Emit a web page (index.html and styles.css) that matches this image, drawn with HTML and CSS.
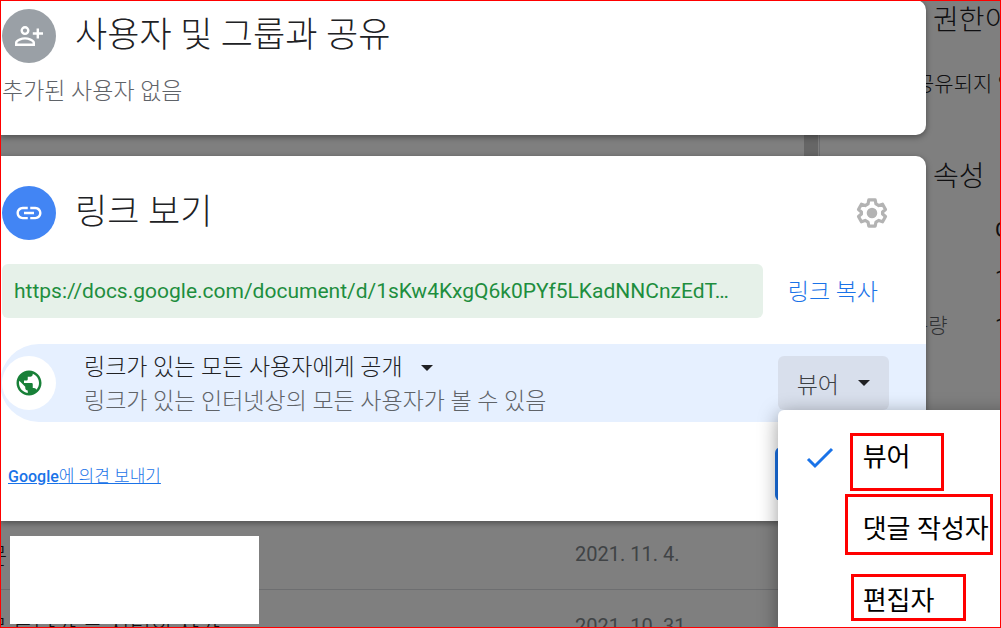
FILE: index.html
```html
<!DOCTYPE html>
<html lang="ko">
<head>
<meta charset="utf-8">
<title>사용자 및 그룹과 공유</title>
<link rel="stylesheet" href="styles.css">
</head>
<body>
<div class="screen">
  <div class="drive">
    <main class="files">
      <div class="file-row"><span class="file-name">문</span><time class="file-date">2021. 11. 4.</time></div>
      <div class="file-row"><span class="file-name">문 트다가 는 시티의 사가</span><time class="file-date">2021. 10. 31.</time></div>
    </main>
    <div class="scrollbar"></div>
    <aside class="details">
      <h2 class="details-title">권한이</h2>
      <p class="details-note">공유되지 않음</p>
      <h2 class="details-title">속성</h2>
      <dl class="facts">
        <dt></dt><dd>Google</dd>
        <dt></dt><dd>1KB</dd>
        <dt>용량</dt><dd>1KB</dd>
      </dl>
    </aside>
  </div>

  <div class="scrim">
    <section class="card people">
      <header class="card-head">
        <span class="badge badge-gray">
          <svg width="30" height="30" viewBox="0 0 30 30" fill="none" stroke="#fff" stroke-width="2.4"><circle cx="11" cy="9.6" r="3.3"/><path d="M2.2 23.8V21.8C2.2 19 8 17.4 11 17.4S19.8 19 19.8 21.8V23.8ZM23.8 7.6V17.4M18.8 12.5H29"/></svg>
        </span>
        <h1 class="card-title">사용자 및 그룹과 공유</h1>
      </header>
      <p class="people-note">추가된 사용자 없음</p>
    </section>

    <section class="card link">
      <header class="card-head">
        <span class="badge badge-blue">
          <svg width="30" height="30" viewBox="0 0 24 24" fill="#fff"><path d="M3.9 12c0-1.71 1.39-3.1 3.1-3.1h4V7H7c-2.76 0-5 2.24-5 5s2.24 5 5 5h4v-1.9H7c-1.71 0-3.1-1.39-3.1-3.1zM8 13h8v-2H8v2zm9-6h-4v1.9h4c1.71 0 3.1 1.39 3.1 3.1s-1.39 3.1-3.1 3.1h-4V17h4c2.76 0 5-2.24 5-5s-2.24-5-5-5z"/></svg>
        </span>
        <h1 class="card-title">링크 보기</h1>
        <button class="gear" type="button" aria-label="설정">
          <svg width="34" height="34" viewBox="0 0 36 36"><path d="M14.6 4.2H21.4L22.2 8.4L25.2 10.1L29.2 8.7L32.3 14.3L29.2 17V19L32.3 21.7L29.2 27.3L25.2 25.9L22.2 27.6L21.4 31.8H14.6L13.8 27.6L10.8 25.9L6.8 27.3L3.7 21.7L6.8 19V17L3.7 14.3L6.8 8.7L10.8 10.1L13.8 8.4Z" fill="none" stroke="#b3b3b3" stroke-width="3.4" stroke-linejoin="round"/><circle cx="18" cy="18" r="5.6" fill="#b3b3b3"/></svg>
        </button>
      </header>

      <div class="url-row">
        <input class="url" type="text" readonly aria-label="링크" value="https://docs.google.com/document/d/1sKw4KxgQ6k0PYf5LKadNNCnzEdT…">
        <button class="copy" type="button">링크 복사</button>
      </div>

      <div class="access">
        <span class="badge badge-white">
          <svg width="30" height="30" viewBox="0 0 24 24" fill="#188038"><path d="M12 2C6.48 2 2 6.48 2 12s4.48 10 10 10 10-4.48 10-10S17.52 2 12 2zm-1 17.93c-3.95-.49-7-3.85-7-7.93 0-.62.08-1.21.21-1.79L9 15v1c0 1.1.9 2 2 2v1.93zm6.9-2.54c-.26-.81-1-1.39-1.9-1.39h-1v-3c0-.55-.45-1-1-1H8v-2h2c.55 0 1-.45 1-1V7h2c1.1 0 2-.9 2-2v-.41c2.93 1.19 5 4.06 5 7.41 0 2.08-.8 3.97-2.1 5.39z"/></svg>
        </span>
        <div class="access-text">
          <button class="scope" type="button">링크가 있는 모든 사용자에게 공개<span class="caret"></span></button>
          <p class="scope-note">링크가 있는 인터넷상의 모든 사용자가 볼 수 있음</p>
        </div>
        <div class="role">
          <button class="role-button" type="button" aria-haspopup="menu" aria-expanded="true">뷰어<span class="caret"></span></button>
          <div class="menu" role="menu">
            <button class="menu-item" type="button" role="menuitem">
              <svg class="check" width="28" height="22" viewBox="0 0 28 22" fill="none" stroke="#1a73e8" stroke-width="3"><path d="M2 12L9 19L26 2"/></svg>
              <span class="menu-label">뷰어<span class="mark mark-viewer"></span></span>
            </button>
            <button class="menu-item" type="button" role="menuitem"><span class="menu-label">댓글 작성자<span class="mark mark-commenter"></span></span></button>
            <button class="menu-item" type="button" role="menuitem"><span class="menu-label">편집자<span class="mark mark-editor"></span></span></button>
          </div>
        </div>
      </div>

      <footer class="card-foot">
        <a class="feedback" href="#feedback"><b>Google</b>에 의견 보내기</a>
        <button class="done" type="button" aria-label="완료"></button>
      </footer>
    </section>
  </div>

  <div class="redaction"></div>
  <div class="frame"></div>
</div>
</body>
</html>
```
FILE: styles.css
```css
* { box-sizing: border-box; }
body {
  margin: 0;
  font-family: Roboto, "Noto Sans CJK KR", sans-serif;
  font-weight: 300;
  color: #202124;
}
h1, h2, p, dl, dd { margin: 0; font-weight: inherit; }
button { border: 0; padding: 0; background: none; font: inherit; color: inherit; text-align: left; white-space: nowrap; }
svg { display: block; }

.screen { position: relative; height: 100vh; overflow: hidden; background: #fff; }

/* Drive page under the dialog */
.drive { display: flex; height: 100%; }
.files { flex: 1; padding-top: 518px; font-size: 20px; }
.file-row { display: flex; height: 72px; align-items: center; border-bottom: 1px solid #dadce0; }
.file-name { width: 589px; flex: none; margin-left: -14px; font-size: 23px; white-space: nowrap; }
.file-date { font-weight: 400; color: #80868b; white-space: nowrap; }
.scrollbar { width: 14px; background: #ccc; }
.details { width: 182px; margin-left: 1px; padding-top: 3px; border-left: 1px solid #dadce0; white-space: nowrap; overflow: hidden; }
.details-title { padding-left: 113px; font-size: 28px; line-height: 36px; }
.details-note { padding: 28px 0 58px 95px; font-size: 21px; line-height: 34px; }
.facts { display: grid; grid-template-columns: 86px 1fr; row-gap: 16px; padding: 19px 0 0 89px; font-size: 21px; line-height: 32px; }
.facts dt { color: #5f6368; }
.facts dd { font-weight: 400; }

/* Share dialog */
.scrim { position: absolute; inset: 0; display: flex; flex-direction: column; gap: 21px; padding-right: 75px; background: rgba(0, 0, 0, .5); }
.card { background: #fff; border-radius: 0 10px 10px 0; box-shadow: 0 2px 6px rgba(0, 0, 0, .4); }
.people { padding: 9px 0 26px; }
.link { padding: 30px 0 18px; }
.card-head { display: flex; align-items: center; gap: 19px; padding: 0 37px 0 2px; }
.card-title { flex: 1; font-size: 35px; line-height: 54px; }
.people-note { padding: 12px 0 0 2px; font-size: 23px; line-height: 34px; color: #5f6368; }
.badge { display: grid; place-items: center; flex: none; width: 54px; height: 54px; border-radius: 50%; }
.badge-gray { background: #9aa0a6; }
.badge-blue { background: #4285f4; }
.badge-white { background: #fff; }

.url-row { display: flex; align-items: center; padding: 24px 48px 0 2px; gap: 25px; }
.url { flex: 1; min-width: 0; height: 54px; padding: 0 12px; border: 0; border-radius: 6px; background: #e6f1e9; color: #1e8e3e; font: 400 21px/54px Roboto, sans-serif; text-overflow: ellipsis; }
.copy { padding-top: 4px; font-size: 23px; line-height: 34px; color: #1a73e8; }

.access { display: flex; align-items: center; height: 78px; margin-top: 26px; padding: 0 37px 0 2px; border-radius: 39px 0 0 39px; background: #e6f0ff; }
.access-text { flex: 1; padding: 4px 0 0 28px; font-size: 23px; line-height: 34px; }
.scope { display: flex; align-items: center; gap: 18px; }
.scope-note { color: #5f6368; }
.caret { border: 6px solid transparent; border-top-color: #202124; border-bottom: 0; }

.role { position: relative; }
.role-button { display: flex; align-items: center; gap: 19px; height: 54px; padding: 0 19px; border-radius: 6px; background: #d8dfec; font-size: 23px; color: #3c4043; }
.menu { position: absolute; top: 100%; left: 0; width: 260px; padding: 8px 0; border-radius: 6px; background: #fff; box-shadow: 0 4px 20px rgba(0, 0, 0, .4); color: #000; }
.menu-item { display: flex; align-items: center; justify-content: flex-end; width: 100%; height: 72px; padding-right: 12px; font-size: 26px; font-weight: 400; }
.check { margin: 8px 29px 0 0; }
.menu-label { position: relative; width: 163px; }
.mark { position: absolute; border: 3px solid #f00; }
.mark-viewer { top: -3px; left: -13px; width: 94px; height: 58px; }
.mark-commenter { top: -14px; left: -18px; width: 148px; height: 61px; }
.mark-editor { top: -6px; left: -12px; width: 115px; height: 47px; }

.card-foot { display: flex; align-items: center; justify-content: space-between; padding: 25px 36px 0 8px; }
.feedback { font-size: 17px; color: #1a73e8; }
.feedback b { font-size: 16px; font-weight: 500; }
.done { width: 115px; height: 54px; border-radius: 6px; background: #1a73e8; }
.link { padding-bottom: 20px; }

.redaction { position: absolute; left: 10px; bottom: 4px; width: 249px; height: 88px; background: #fff; }
.frame { position: absolute; inset: 0; border: 1px solid #f00; pointer-events: none; }
```
